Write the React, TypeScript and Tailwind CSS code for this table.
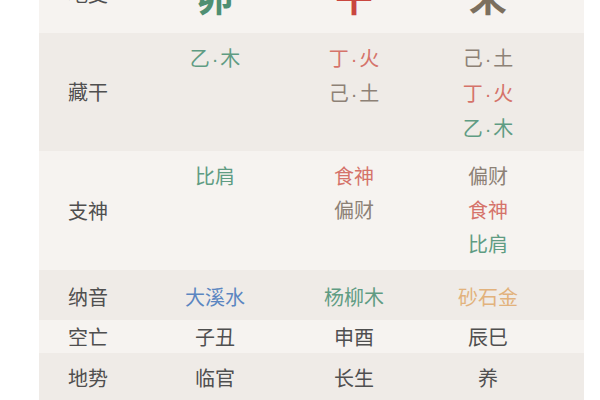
const green = "text-[#5f9c83]";
const red = "text-[#d5736a]";
const earth = "text-[#8d8176]";

type Cell = { text: string; color: string };

// "乙·木" — the CJK font draws the middle dot full width, so set it narrow
const withDot = (t: string) => {
  const [a, b] = t.split("·");
  if (b === undefined) return t;
  return (
    <>
      {a}
      <span className="px-[2px] font-['Liberation_Sans',sans-serif]">·</span>
      {b}
    </>
  );
};

const Stack = ({ items }: { items: Cell[] }) => (
  <div className="flex flex-col items-center leading-[34px]">
    {items.map((it, i) => (
      <span key={i} className={it.color}>
        {withDot(it.text)}
      </span>
    ))}
  </div>
);

const Label = ({ children }: { children: React.ReactNode }) => (
  <div className="self-center pl-[29px] text-[#4f4f4f]">{children}</div>
);

export default function App() {
  return (
    <div className="h-[400px] w-[600px] overflow-hidden bg-white font-['Noto_Sans_CJK_SC','Noto_Sans',sans-serif] text-[20px]">
      <div className="ml-[39px] mt-[-45px] w-[545px]">
        {/* 地支 */}
        <div className="grid h-[78px] grid-cols-[107px_138px_140px_128px_1fr] items-center bg-[#f6f3f0]">
          <Label>地支</Label>
          <div className="text-center text-[38px] font-bold text-[#4f8f72]">卯</div>
          <div className="text-center text-[38px] font-bold text-[#c9463f]">午</div>
          <div className="text-center text-[38px] font-bold text-[#7c6f5e]">未</div>
          <div />
        </div>

        {/* 藏干 */}
        <div className="grid h-[118px] grid-cols-[107px_138px_140px_128px_1fr] bg-[#efebe7]">
          <Label>藏干</Label>
          <div className="pt-[8px]">
            <Stack items={[{ text: "乙·木", color: green }]} />
          </div>
          <div className="pt-[8px]">
            <Stack
              items={[
                { text: "丁·火", color: red },
                { text: "己·土", color: earth },
              ]}
            />
          </div>
          <div className="pt-[8px]">
            <Stack
              items={[
                { text: "己·土", color: earth },
                { text: "丁·火", color: red },
                { text: "乙·木", color: green },
              ]}
            />
          </div>
          <div />
        </div>

        {/* 支神 */}
        <div className="grid h-[119px] grid-cols-[107px_138px_140px_128px_1fr] bg-[#f6f3f0]">
          <Label>支神</Label>
          <div className="pt-[8px]">
            <Stack items={[{ text: "比肩", color: green }]} />
          </div>
          <div className="pt-[8px]">
            <Stack
              items={[
                { text: "食神", color: red },
                { text: "偏财", color: earth },
              ]}
            />
          </div>
          <div className="pt-[8px]">
            <Stack
              items={[
                { text: "偏财", color: earth },
                { text: "食神", color: red },
                { text: "比肩", color: green },
              ]}
            />
          </div>
          <div />
        </div>

        {/* 纳音 */}
        <div className="grid h-[50px] grid-cols-[107px_138px_140px_128px_1fr] items-center bg-[#efebe7] pt-[3px]">
          <Label>纳音</Label>
          <div className="text-center text-[#5b86c1]">大溪水</div>
          <div className="text-center text-[#5f9c83]">杨柳木</div>
          <div className="text-center text-[#e2b27c]">砂石金</div>
          <div />
        </div>

        {/* 空亡 */}
        <div className="grid h-[33px] grid-cols-[107px_138px_140px_128px_1fr] items-center bg-[#f6f3f0] text-[#4f4f4f]">
          <Label>空亡</Label>
          <div className="text-center">子丑</div>
          <div className="text-center">申酉</div>
          <div className="text-center">辰巳</div>
          <div />
        </div>

        {/* 地势 */}
        <div className="grid h-[50px] grid-cols-[107px_138px_140px_128px_1fr] items-center bg-[#efebe7] text-[#4f4f4f]">
          <Label>地势</Label>
          <div className="text-center">临官</div>
          <div className="text-center">长生</div>
          <div className="text-center">养</div>
          <div />
        </div>
      </div>
    </div>
  );
}
